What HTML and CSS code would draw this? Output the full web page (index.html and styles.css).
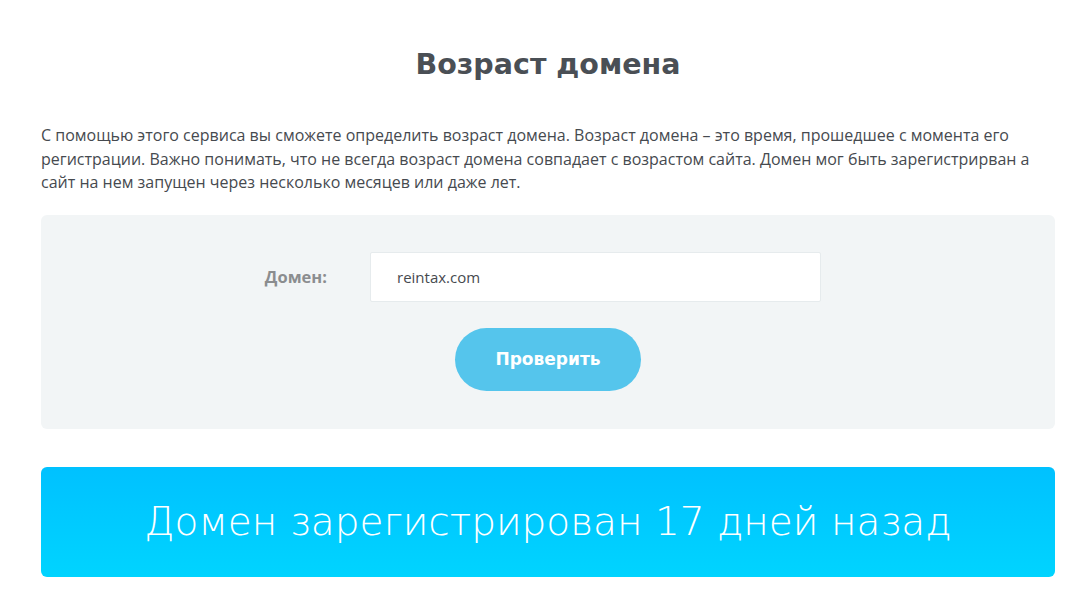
FILE: index.html
```html
<!DOCTYPE html>
<html lang="ru">
<head>
    <meta charset="UTF-8">
    <meta name="viewport" content="width=device-width, initial-scale=1.0">
    <title>Возраст домена</title>
    <link rel="stylesheet" href="styles.css">
</head>
<body>
    <div class="container">
        <h1>Возраст домена</h1>

        <p class="intro">С помощью этого сервиса вы сможете определить возраст домена. Возраст домена – это время, прошедшее с момента его регистрации. Важно понимать, что не всегда возраст домена совпадает с возрастом сайта. Домен мог быть зарегистрирван а сайт на нем запущен через несколько месяцев или даже лет.</p>

        <form class="checkForm">
            <div class="field">
                <label for="domain">Домен:</label>
                <input type="text" id="domain" name="domain" value="reintax.com">
            </div>
            <button type="submit">Проверить</button>
        </form>

        <div class="result">Домен зарегистрирован 17 дней назад</div>
    </div>
</body>
</html>
```

FILE: styles.css
```css
body {
    font-family: "Open Sans", sans-serif;
    margin: 0;
    padding: 0;
    background-color: #fff;
    color: #464a4f;
}
.container {
    width: 1014px;
    margin: 0 29px 0 41px;
    padding-top: 45px;
}
h1 {
    font-family: "DejaVu Sans", sans-serif;
    font-size: 28.5px;
    font-weight: bold;
    color: #4a4f55;
    text-align: center;
    margin: 0 0 39px;
    line-height: 40px;
}
.intro {
    max-width: 1000px;
    font-size: 16px;
    line-height: 23.5px;
    margin: 0 0 20px;
}
.checkForm {
    background-color: #f2f5f6;
    border-radius: 6px;
    padding: 37px 0 38px;
    margin-bottom: 38px;
    display: flex;
    flex-direction: column;
    align-items: center;
}
.field {
    display: flex;
    align-items: center;
    width: 100%;
    padding-left: 186px;
    box-sizing: border-box;
}
.field label {
    width: 100px;
    text-align: right;
    font-size: 16.5px;
    font-weight: bold;
    color: #8b8d8f;
    margin-right: 43px;
}
.field input {
    width: 451px;
    height: 50px;
    box-sizing: border-box;
    border: 1px solid #e6ebed;
    border-radius: 2px;
    background: #fff;
    padding: 0 26px;
    font-family: "Open Sans", sans-serif;
    font-size: 15px;
    color: #464a4f;
    outline: none;
}
button {
    margin-top: 26px;
    width: 186px;
    height: 63px;
    border: none;
    border-radius: 32px;
    background-color: #55c5ec;
    color: #fff;
    font-family: "DejaVu Sans", sans-serif;
    font-size: 17px;
    font-weight: bold;
    cursor: pointer;
}
.result {
    height: 110px;
    border-radius: 6px;
    background: linear-gradient(#00c1ff, #00d4ff);
    color: #fff;
    font-family: "DejaVu Sans", sans-serif;
    font-size: 39px;
    font-weight: 200;
    display: flex;
    align-items: center;
    justify-content: center;
}
```
